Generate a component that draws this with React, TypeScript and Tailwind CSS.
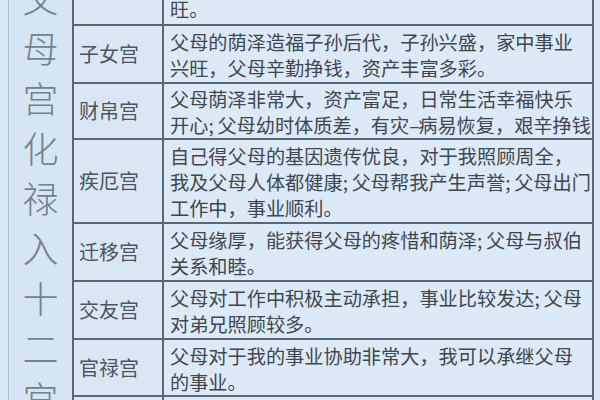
import React from "react";

const FONT = '"Noto Sans CJK SC", "Noto Sans", sans-serif';

function Line({ text }: { text: string }) {
  const parts = text.split(/([;–])/);
  return (
    <div className="whitespace-nowrap">
      {parts.map((p, i) =>
        p === ";" ? (
          <span key={i} className="inline-block w-[9px]">;</span>
        ) : p === "–" ? (
          <span key={i} className="inline-block w-[9px]">–</span>
        ) : (
          <span key={i}>{p}</span>
        )
      )}
    </div>
  );
}

type Row = { name: string; lines: string[]; h: string };

const rows: Row[] = [
  { name: "", lines: ["旺。"], h: "h-[26px]" },
  {
    name: "子女宫",
    lines: ["父母的荫泽造福子孙后代，子孙兴盛，家中事业", "兴旺，父母辛勤挣钱，资产丰富多彩。"],
    h: "h-[58px]",
  },
  {
    name: "财帛宫",
    lines: ["父母荫泽非常大，资产富足，日常生活幸福快乐", "开心;父母幼时体质差，有灾–病易恢复，艰辛挣钱"],
    h: "h-[56px]",
  },
  {
    name: "疾厄宫",
    lines: [
      "自己得父母的基因遗传优良，对于我照顾周全，",
      "我及父母人体都健康;父母帮我产生声誉;父母出门",
      "工作中，事业顺利。",
    ],
    h: "h-[84px]",
  },
  {
    name: "迁移宫",
    lines: ["父母缘厚，能获得父母的疼惜和荫泽;父母与叔伯", "关系和睦。"],
    h: "h-[58px]",
  },
  {
    name: "交友宫",
    lines: ["父母对工作中积极主动承担，事业比较发达;父母", "对弟兄照顾较多。"],
    h: "h-[58px]",
  },
  {
    name: "官禄宫",
    lines: ["父母对于我的事业协助非常大，我可以承继父母", "的事业。"],
    h: "h-[57px]",
  },
];

export default function App() {
  const bigChars = "父母宫化禄入十二宫".split("");
  return (
    <div
      className="w-[600px] h-[400px] overflow-hidden bg-[#d9e7f4] flex"
      style={{ fontFamily: FONT }}
    >
      <div className="ml-[8px] flex h-[420px]">
        <div className="w-[66px] border-l border-l-[#a9bed2] border-r-2 border-r-[#5c6670] bg-[#d6e5f3] flex flex-col items-center overflow-hidden">
          <div className="-mt-[28px] flex flex-col items-center">
            {bigChars.map((c, i) => (
              <div key={i} className="text-[36px] leading-[50px] font-light text-[#72818e]">
                {c}
              </div>
            ))}
          </div>
        </div>
        <div className="flex flex-col w-[520px]">
          {rows.map((r, i) => (
            <div key={i} className={`flex border-b-2 border-b-[#5c6670] ${r.h}`}>
              <div className="w-[90px] border-r-2 border-r-[#5c6670] flex items-center pl-[5px] text-[20px] text-[#4d545b]">
                {r.name}
              </div>
              <div
                className={
                  i === 0
                    ? "w-[430px] border-r-2 border-r-[#5c6670] bg-[#dce9f6] flex flex-col justify-start pl-[6px] text-[19.2px] leading-[26px] text-[#3f464d]"
                    : "w-[430px] border-r-2 border-r-[#5c6670] bg-[#dce9f6] flex flex-col justify-center pl-[6px] pt-[2px] text-[19.2px] leading-[26px] text-[#3f464d]"
                }
              >
                {i === 0 ? (
                  <div className="-mt-[4px]">
                    <Line text={r.lines[0]} />
                  </div>
                ) : (
                  r.lines.map((l, j) => <Line key={j} text={l} />)
                )}
              </div>
            </div>
          ))}
          <div className="flex flex-1">
            <div className="w-[90px] border-r-2 border-r-[#5c6670]"></div>
            <div className="w-[430px] border-r-2 border-r-[#5c6670] bg-[#dce9f6]"></div>
          </div>
        </div>
      </div>
    </div>
  );
}
